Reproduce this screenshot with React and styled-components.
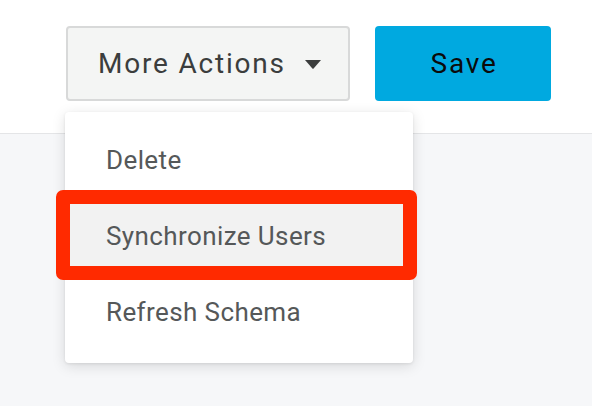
import React from "react";
import styled, { createGlobalStyle } from "styled-components";

const GlobalStyle = createGlobalStyle`
  html, body {
    margin: 0;
    padding: 0;
    background: #f6f7f9;
    font-family: Roboto, "Liberation Sans", sans-serif;
  }
  * { box-sizing: border-box; }
`;

const Page = styled.div`
  width: 592px;
  height: 406px;
  background: #f6f7f9;
  overflow: hidden;
`;

const Header = styled.header`
  height: 134px;
  background: #ffffff;
  border-bottom: 1px solid #e4e5e7;
  display: flex;
  justify-content: flex-end;
  align-items: flex-start;
  gap: 25px;
  padding: 26px 41px 0 0;
`;

const DropdownWrap = styled.div`
  position: relative;
`;

const Button = styled.button`
  height: 75px;
  border-radius: 4px;
  font-family: Roboto, "Liberation Sans", sans-serif;
  font-size: 28px;
  letter-spacing: 1.8px;
  display: flex;
  align-items: center;
  cursor: pointer;
  margin: 0;
`;

const SecondaryButton = styled(Button)`
  width: 284px;
  background: #f4f5f4;
  border: 2px solid #d8d9d9;
  color: #3b3d3d;
  padding: 0 27px 0 30px;
  gap: 19px;
  justify-content: flex-start;
`;

const PrimaryButton = styled(Button)`
  width: 176px;
  background: #00a9e0;
  border: none;
  color: #0b0b0b;
  justify-content: center;
  padding: 0 0 0 2px;
`;

const Caret = styled.svg`
  width: 16px;
  height: 9px;
  flex: none;
  margin-top: 2px;
`;

const Menu = styled.ul`
  position: absolute;
  top: calc(100% + 11px);
  left: -1px;
  width: 348px;
  margin: 0;
  padding: 10px 0 13px;
  list-style: none;
  background: #ffffff;
  border-radius: 4px;
  box-shadow: 0 3px 14px rgba(0, 0, 0, 0.13), 0 1px 3px rgba(0, 0, 0, 0.08);
  z-index: 2;
`;

const MenuItem = styled.li`
  position: relative;
  height: 76px;
  display: flex;
  align-items: center;
  padding-left: 41px;
  font-size: 26px;
  letter-spacing: 0.4px;
  color: #555859;
  background: ${(p) => (p.$active ? "#f2f2f2" : "transparent")};
`;

const Highlight = styled.span`
  position: absolute;
  top: -8px;
  right: -4px;
  bottom: -6px;
  left: -9px;
  border: 14px solid #ff2a00;
  border-radius: 7px;
  pointer-events: none;
`;

const items = [
  { label: "Delete" },
  { label: "Synchronize Users", active: true },
  { label: "Refresh Schema" },
];

export default function App() {
  return (
    <Page>
      <GlobalStyle />
      <Header>
        <DropdownWrap>
          <SecondaryButton>
            <span>More Actions</span>
            <Caret viewBox="0 0 16 9">
              <path d="M0 0 H16 L8.6 8.6 Q8 9.1 7.4 8.6 Z" fill="#3b3d3d" />
            </Caret>
          </SecondaryButton>
          <Menu>
            {items.map((it) => (
              <MenuItem key={it.label} $active={it.active}>
                {it.label}
                {it.active && <Highlight />}
              </MenuItem>
            ))}
          </Menu>
        </DropdownWrap>
        <PrimaryButton>Save</PrimaryButton>
      </Header>
    </Page>
  );
}
